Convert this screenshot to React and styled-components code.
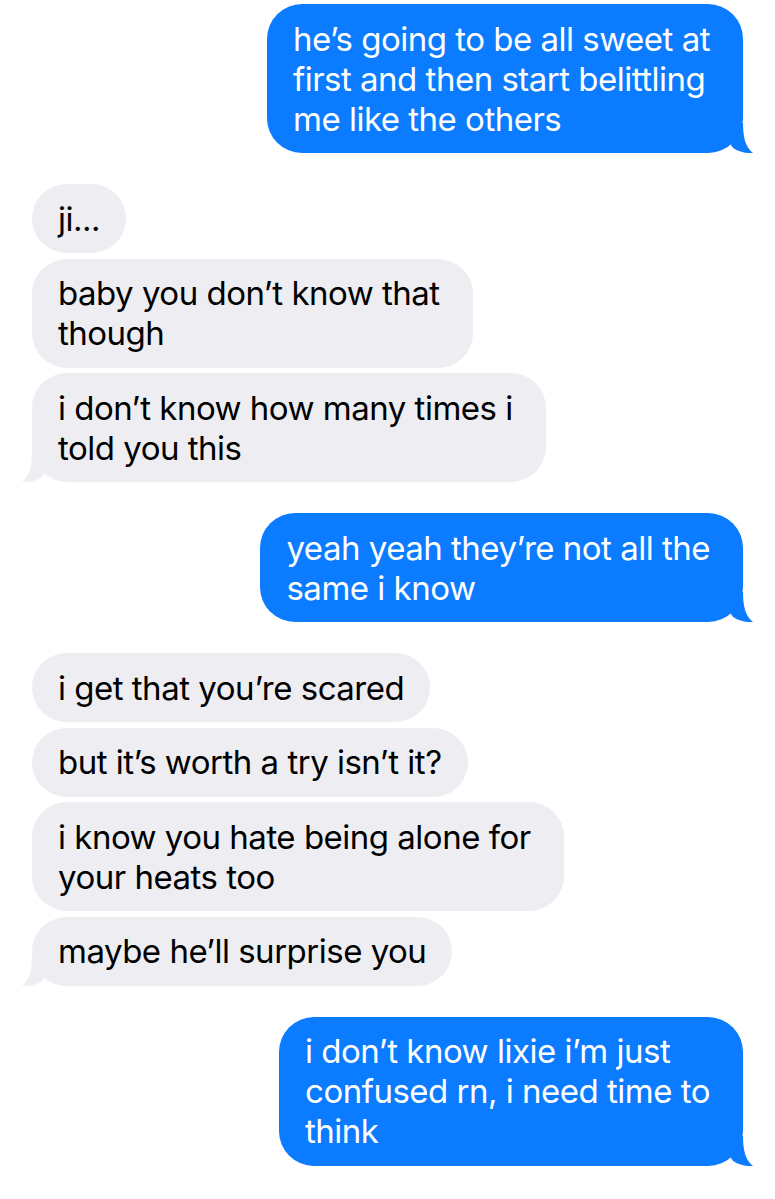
import React from "react";
import styled, { createGlobalStyle, css } from "styled-components";

const GlobalStyle = createGlobalStyle`
  html, body {
    margin: 0;
    padding: 0;
    background: #ffffff;
  }
  body {
    font-family: Inter, "Noto Sans", "Liberation Sans", sans-serif;
    -webkit-font-smoothing: antialiased;
  }
`;

const BLUE = "#0B7BFF";
const GRAY = "#EDEDF2";

const Thread = styled.div`
  display: flex;
  flex-direction: column;
  gap: 31px;
  padding: 4px 32px 32px;
  width: 775px;
  box-sizing: border-box;
  min-height: 1199px;
`;

const Group = styled.div`
  display: flex;
  flex-direction: column;
  gap: 5.5px;
  align-items: ${(p) => (p.$sent ? "flex-end" : "flex-start")};
`;

const Bubble = styled.div`
  position: relative;
  box-sizing: border-box;
  border-radius: 35px;
  font-size: 33px;
  line-height: 40px;
  letter-spacing: -0.5px;
  white-space: nowrap;
  padding: 14.5px ${(p) => (p.$multi ? "33px" : "26px")} 14.5px 26px;
  ${(p) =>
    p.$sent
      ? css`
          background: ${BLUE};
          color: #ffffff;
        `
      : css`
          background: ${GRAY};
          color: #000000;
        `}
`;

const TailSvg = styled.svg`
  position: absolute;
  bottom: 0;
  width: 40px;
  height: 30px;
  ${(p) =>
    p.$sent
      ? css`
          right: -10px;
        `
      : css`
          left: -10px;
          transform: scaleX(-1);
        `}
`;

function Tail({ sent }) {
  return (
    <TailSvg $sent={sent} viewBox="0 0 40 30" aria-hidden="true">
      <path
        d="M20 0 L30 0 C30 13 32 24 40 30 C34 30.6 27 29.2 20.5 25.2 C17 22 14 14 14 0 Z"
        fill={sent ? BLUE : GRAY}
      />
    </TailSvg>
  );
}

function Message({ sent, tail, lines }) {
  return (
    <Bubble $sent={sent} $multi={lines.length > 1}>
      {lines.map((l, i) => (
        <React.Fragment key={i}>
          {i > 0 && <br />}
          {l}
        </React.Fragment>
      ))}
      {tail && <Tail sent={sent} />}
    </Bubble>
  );
}

const groups = [
  {
    sent: true,
    msgs: [["he’s going to be all sweet at", "first and then start belittling", "me like the others"]],
  },
  {
    sent: false,
    msgs: [
      ["ji..."],
      ["baby you don’t know that", "though"],
      ["i don’t know how many times i", "told you this"],
    ],
  },
  {
    sent: true,
    msgs: [["yeah yeah they’re not all the", "same i know"]],
  },
  {
    sent: false,
    msgs: [
      ["i get that you’re scared"],
      ["but it’s worth a try isn’t it?"],
      ["i know you hate being alone for", "your heats too"],
      ["maybe he’ll surprise you"],
    ],
  },
  {
    sent: true,
    msgs: [["i don’t know lixie i’m just", "confused rn, i need time to", "think"]],
  },
];

export default function App() {
  return (
    <>
      <GlobalStyle />
      <Thread>
        {groups.map((g, gi) => (
          <Group key={gi} $sent={g.sent}>
            {g.msgs.map((lines, mi) => (
              <Message
                key={mi}
                sent={g.sent}
                tail={mi === g.msgs.length - 1}
                lines={lines}
              />
            ))}
          </Group>
        ))}
      </Thread>
    </>
  );
}
